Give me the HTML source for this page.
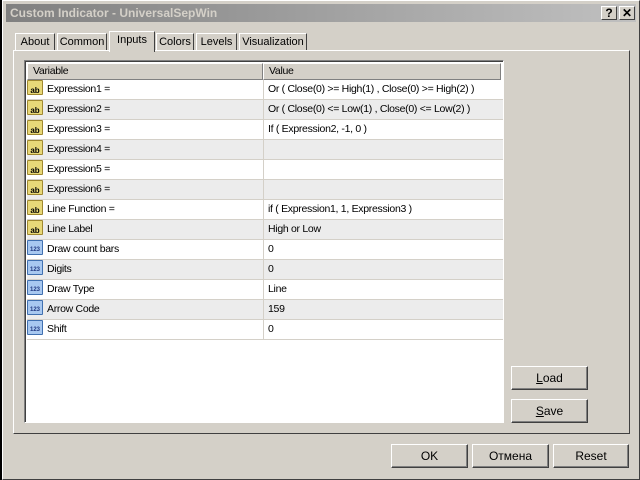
<!DOCTYPE html>
<html><head><meta charset="utf-8"><style>
*{box-sizing:border-box;margin:0;padding:0}
body{width:640px;height:480px;background:#000;position:relative;overflow:hidden;font-family:"Liberation Sans",sans-serif;font-size:11px;color:#000}
.win{position:absolute;left:2px;top:0;width:638px;height:480px;background:#d4d0c8;border-left:1px solid #fff;border-top:1px solid #fff;border-right:1px solid #404040;border-bottom:1px solid #404040}
.title{position:absolute;left:3px;top:3px;width:630px;height:18px;background:linear-gradient(90deg,#808080,#c0c0c0);color:#d4d0c8;font-weight:bold;font-size:12px;line-height:18px;padding-left:4px}
.tb{position:absolute;top:2px;width:16px;height:14px;background:#d4d0c8;border:1px solid;border-color:#fff #404040 #404040 #fff;font-weight:bold;color:#000;text-align:center;line-height:12px;font-size:12px}
.tab{position:absolute;top:32px;height:18px;border:1px solid;border-color:#fff #404040 transparent #fff;line-height:16px;text-align:center;background:#d4d0c8}
.panel{position:absolute;left:10px;top:49px;width:617px;height:384px;border:1px solid;border-color:#fff #404040 #404040 #fff}
.list{position:absolute;left:24px;top:60px;width:480px;height:363px;background:#fff;border:1px solid;border-color:#808080 #fff #fff #808080;box-shadow:inset 1px 1px 0 #404040;font-size:10.5px;letter-spacing:-0.3px}
.hdr{position:absolute;top:2px;height:17px;background:#d4d0c8;border:1px solid;border-color:#fff #808080 #808080 #fff;line-height:15px;padding-left:5px}
.row{position:absolute;left:2px;width:476px;height:20px;border-bottom:1px solid #d4d0c8}
.row span{position:absolute;top:0;line-height:19px;white-space:nowrap}
.row .v{left:236px;border-left:1px solid #d4d0c8;height:20px;padding-left:4px;width:240px}
.ic{position:absolute;left:0;top:2px;width:16px;height:15px;border-radius:1px;font-size:8px;font-weight:bold;text-align:center;line-height:15px;letter-spacing:0}
.ab{background:#e8d878;border:1px solid #a08830;color:#000}
.n{background:#a8c8f0;border:1px solid #4070b0;color:#203880;font-size:6px}
.btn{position:absolute;height:24px;background:#d4d0c8;border:1px solid;border-color:#fff #404040 #404040 #fff;box-shadow:inset -1px -1px 0 #808080;text-align:center;line-height:22px;font-size:12px}
</style></head><body>
<div class="win">
<div class="title">Custom Indicator - UniversalSepWin
<div class="tb" style="left:595px">?</div><div class="tb" style="left:613px">✕</div></div>
<div class="tab" style="left:12px;width:40px">About</div>
<div class="tab" style="left:54px;width:50px">Common</div>
<div class="tab" style="left:106px;top:30px;height:21px;width:46px;border-bottom:none;z-index:2">Inputs</div>
<div class="tab" style="left:153px;width:38px">Colors</div>
<div class="tab" style="left:193px;width:41px">Levels</div>
<div class="tab" style="left:236px;width:68px">Visualization</div>
<div class="panel"></div>
</div>
<div class="list">
<div class="hdr" style="left:2px;width:236px">Variable</div>
<div class="hdr" style="left:238px;width:238px">Value</div>
<div id="rows"></div>
</div>
<div class="btn" style="left:511px;top:366px;width:77px"><u>L</u>oad</div>
<div class="btn" style="left:511px;top:399px;width:77px"><u>S</u>ave</div>
<div class="btn" style="left:391px;top:444px;width:77px">OK</div>
<div class="btn" style="left:472px;top:444px;width:77px">Отмена</div>
<div class="btn" style="left:553px;top:444px;width:76px">Reset</div>
<script>
var d=[["ab","Expression1 =","Or ( Close(0) >= High(1) , Close(0) >= High(2) )"],["ab","Expression2 =","Or ( Close(0) <= Low(1) , Close(0) <= Low(2) )"],["ab","Expression3 =","If ( Expression2, -1, 0 )"],["ab","Expression4 =",""],["ab","Expression5 =",""],["ab","Expression6 =",""],["ab","Line Function =","if ( Expression1, 1, Expression3 )"],["ab","Line Label","High or Low"],["n","Draw count bars","0"],["n","Digits","0"],["n","Draw Type","Line"],["n","Arrow Code","159"],["n","Shift","0"]];
var h="";d.forEach(function(r,i){var t=r[0]=="ab"?"ab":"123";h+='<div class="row" style="top:'+(19+i*20)+'px;background:'+(i%2?'#ececec':'#fff')+'"><span class="ic '+r[0]+'">'+t+'</span><span style="left:20px">'+r[1]+'</span><span class="v">'+r[2].replace(/</g,"&lt;")+'</span></div>'});
document.getElementById("rows").innerHTML=h;
</script>
</body></html>
